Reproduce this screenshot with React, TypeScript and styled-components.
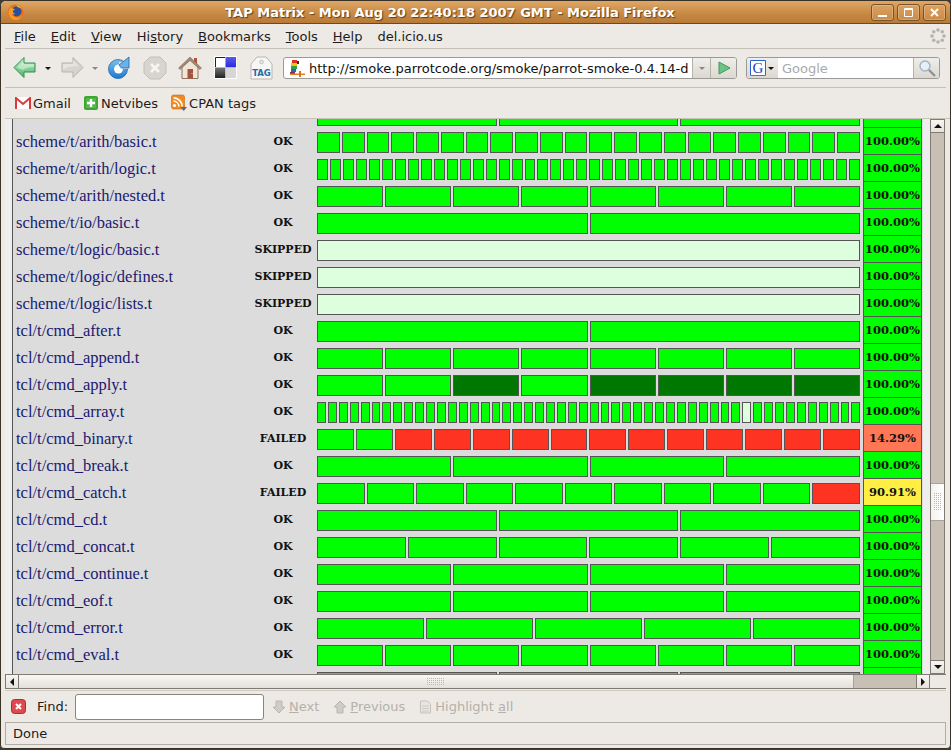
import React from "react";
import styled, { createGlobalStyle } from "styled-components";

const GlobalStyle = createGlobalStyle`
  html, body {
    margin: 0;
    padding: 0;
    background: #3c3b37;
  }
`;

const Window = styled.div`
  width: 951px;
  height: 749px;
  box-sizing: border-box;
  display: flex;
  flex-direction: column;
  background: #edeae5;
  border: 1px solid #3a3226;
  border-radius: 6px 6px 4px 4px;
  overflow: hidden;
  font-family: "DejaVu Sans", sans-serif;
  font-size: 13px;
  color: #1c1c1c;
`;

const TitleBar = styled.div`
  height: 22px;
  flex: none;
  display: flex;
  align-items: center;
  padding: 0 4px 0 6px;
  background: linear-gradient(#dfa766, #c98a45 55%, #b87a38);
  border-bottom: 1px solid #6b4a22;
`;

const TitleText = styled.div`
  flex: 1;
  text-align: center;
  font-weight: bold;
  font-size: 13px;
  color: #fff;
  text-shadow: 1px 1px 1px #5e3e16;
  padding-left: 8px;
`;

const WinButton = styled.div`
  width: 21px;
  height: 15px;
  margin-left: 3px;
  border: 1px solid #7a5426;
  border-radius: 3px;
  display: flex;
  align-items: center;
  justify-content: center;
  background: linear-gradient(#dba264, #c98b48);
  box-shadow: inset 0 0 0 1px rgba(255, 255, 255, 0.22);
`;

const MenuBar = styled.div`
  height: 24px;
  flex: none;
  margin: 0 4px;
  display: flex;
  align-items: center;
  justify-content: space-between;
  padding: 0 0 0 9px;
  border-bottom: 1px solid #c4bfb7;
`;

const MenuItems = styled.div`
  display: flex;
  gap: 15px;
`;

const NavBar = styled.div`
  height: 38px;
  flex: none;
  margin: 0 4px;
  display: flex;
  align-items: center;
  padding-left: 8px;
  border-bottom: 1px solid #c4bfb7;
`;

const NavIcon = styled.div<{ $w: number; $ml?: number }>`
  width: ${({ $w }) => $w}px;
  margin-left: ${({ $ml }) => $ml ?? 0}px;
  flex: none;
  display: flex;
  align-items: center;
  justify-content: center;
`;

const Caret = styled.div<{ $off?: boolean }>`
  width: 0;
  height: 0;
  border-left: 3px solid transparent;
  border-right: 3px solid transparent;
  border-top: 3px solid ${({ $off }) => ($off ? "#888" : "#111")};
`;

const UrlBox = styled.div`
  width: 454px;
  height: 22px;
  margin-left: 10px;
  box-sizing: border-box;
  flex: none;
  display: flex;
  align-items: stretch;
  border: 1px solid #9c9a96;
  border-radius: 3px;
  background: #fff;
  overflow: hidden;
`;

const UrlText = styled.div`
  flex: 1;
  display: flex;
  align-items: center;
  gap: 4px;
  padding-left: 5px;
  overflow: hidden;
  white-space: nowrap;
  font-size: 13px;
  color: #111;
`;

const BoxButton = styled.div<{ $w: number }>`
  width: ${({ $w }) => $w}px;
  flex: none;
  display: flex;
  align-items: center;
  justify-content: center;
  background: linear-gradient(#f0eee9, #dcd8d1);
  border-left: 1px solid #b5b2ac;
`;

const SearchBox = styled(UrlBox)`
  width: 194px;
  margin-left: 9px;
`;

const EngineButton = styled.div`
  width: 31px;
  flex: none;
  display: flex;
  align-items: center;
  gap: 2px;
  padding-left: 3px;
  box-sizing: border-box;
  background: linear-gradient(#f0eee9, #dcd8d1);
`;

const SearchText = styled.div`
  flex: 1;
  display: flex;
  align-items: center;
  padding-left: 4px;
  color: #aaa;
`;

const BookmarkBar = styled.div`
  height: 30px;
  flex: none;
  display: flex;
  align-items: center;
  gap: 13px;
  padding-left: 10px;
  border-bottom: 1px solid #c9c2b6;
  margin: 0 0 0 4px;
`;

const Bookmark = styled.div`
  display: flex;
  align-items: center;
  gap: 2px;
`;

const ContentArea = styled.div`
  flex: 1;
  min-height: 0;
  display: flex;
  margin: 0 4px;
`;

const Viewport = styled.div`
  flex: 1;
  overflow: hidden;
  background: #eeeeee;
  padding-left: 7px;
`;

const Matrix = styled.div`
  width: 910px;
  margin-top: -18px;
  border-left: 1px solid #555;
  background: #dcdcdc;
  font-family: "DejaVu Serif", serif;
`;

const Row = styled.div`
  height: 27px;
  display: flex;
`;

const FileName = styled.div`
  width: 236px;
  flex: none;
  padding: 5px 0 0 3px;
  font-family: "Liberation Serif", serif;
  font-size: 16.5px;
  line-height: 17px;
  color: #191970;
  white-space: nowrap;
`;

const Status = styled.div`
  width: 62px;
  flex: none;
  padding-top: 6px;
  text-align: center;
  font-size: 11px;
  line-height: 15px;
  font-weight: bold;
  color: #111;
`;

const Bars = styled.div`
  width: 543px;
  flex: none;
  margin: 4px 0 0 3px;
  height: 21px;
  display: flex;
  gap: 2px;
`;

const Bar = styled.div<{ $kind: string }>`
  flex: 1;
  box-sizing: border-box;
  border: 1px solid #555;
  background: ${({ $kind }) =>
    ({ g: "#00ff00", d: "#007700", r: "#ff3322", s: "#ddffdd" } as Record<string, string>)[$kind]};
`;

const Percent = styled.div<{ $bg: string }>`
  width: 59px;
  flex: none;
  margin-left: 3px;
  box-sizing: border-box;
  border: 1px solid #555;
  border-top: 0;
  text-align: center;
  font-size: 11.5px;
  font-weight: bold;
  line-height: 27px;
  color: #111;
  background: ${({ $bg }) => $bg};
`;

const VScroll = styled.div`
  width: 15px;
  margin: 0 1px 0 0;
  flex: none;
  display: flex;
  flex-direction: column;
  background: #c9c0b5;
  border-left: 1px solid #7f7a72;
  border-right: 1px solid #7f7a72;
  box-sizing: border-box;
`;

const ScrollButton = styled.div`
  height: 14px;
  flex: none;
  display: flex;
  align-items: center;
  justify-content: center;
  background: linear-gradient(#f7f5f2, #e6e2dc);
  border-top: 1px solid #7f7a72;
  border-bottom: 1px solid #7f7a72;
  box-sizing: border-box;
`;

const VTrack = styled.div`
  flex: 1;
  display: flex;
  flex-direction: column;
  padding-top: 350px;
`;

const VThumb = styled.div`
  height: 36px;
  display: flex;
  align-items: center;
  justify-content: center;
  background: linear-gradient(90deg, #f4f2ef, #ffffff);
  border-top: 1px solid #a8a29a;
  border-bottom: 1px solid #a8a29a;
`;

const Triangle = styled.div<{ $dir: "up" | "down" | "left" | "right" }>`
  width: 0;
  height: 0;
  border: 4px solid transparent;
  ${({ $dir }) =>
    $dir === "up"
      ? "border-bottom-color:#111;border-top-width:0;"
      : $dir === "down"
        ? "border-top-color:#111;border-bottom-width:0;"
        : $dir === "left"
          ? "border-right-color:#111;border-left-width:0;"
          : "border-left-color:#111;border-right-width:0;"}
`;

const HScroll = styled.div`
  height: 15px;
  flex: none;
  margin: 0 4px;
  display: flex;
  box-sizing: border-box;
  border-top: 1px solid #7f7a72;
  border-bottom: 1px solid #7f7a72;
  padding-right: 16px;
`;

const HButton = styled.div`
  width: 12px;
  flex: none;
  display: flex;
  align-items: center;
  justify-content: center;
  background: linear-gradient(#f7f5f2, #e6e2dc);
  border-left: 1px solid #7f7a72;
  border-right: 1px solid #7f7a72;
`;

const HThumb = styled.div`
  flex: 1;
  display: flex;
  align-items: center;
  justify-content: center;
  background: linear-gradient(#f9f7f5, #e4dfd9);
  border-right: 1px solid #a8a29a;
`;

const HTrack = styled.div`
  width: 62px;
  flex: none;
  background: #c9c0b5;
`;

const FindBar = styled.div`
  height: 31px;
  flex: none;
  margin: 1px 4px 0;
  display: flex;
  align-items: center;
  padding-left: 6px;
  border-top: 1px solid #d0ccc5;
`;

const FindLabel = styled.div`
  margin-left: 11px;
`;

const FindInput = styled.div`
  width: 189px;
  height: 26px;
  box-sizing: border-box;
  margin-left: 7px;
  border: 1px solid #8a8378;
  border-radius: 3px;
  background: #fff;
`;

const FindAction = styled.div<{ $ml: number }>`
  margin-left: ${({ $ml }) => $ml}px;
  display: flex;
  align-items: center;
  gap: 3px;
  color: #b4b1ab;
`;

const StatusBar = styled.div`
  height: 23px;
  flex: none;
  margin: 0 4px 3px;
  box-sizing: border-box;
  display: flex;
  align-items: center;
  padding-left: 7px;
  border: 1px solid #b3aea5;
`;

const Key = styled.span`
  text-decoration: underline;
`;

type RowData = { name: string; status: string; bars: string; percent: string };

const rep = (kind: string, n: number) => kind.repeat(n);

const rows: RowData[] = [
  { name: "", status: "", bars: "ggg", percent: "" },
  { name: "scheme/t/arith/basic.t", status: "OK", bars: rep("g", 22), percent: "100.00%" },
  { name: "scheme/t/arith/logic.t", status: "OK", bars: rep("g", 42), percent: "100.00%" },
  { name: "scheme/t/arith/nested.t", status: "OK", bars: rep("g", 8), percent: "100.00%" },
  { name: "scheme/t/io/basic.t", status: "OK", bars: "gg", percent: "100.00%" },
  { name: "scheme/t/logic/basic.t", status: "SKIPPED", bars: "s", percent: "100.00%" },
  { name: "scheme/t/logic/defines.t", status: "SKIPPED", bars: "s", percent: "100.00%" },
  { name: "scheme/t/logic/lists.t", status: "SKIPPED", bars: "s", percent: "100.00%" },
  { name: "tcl/t/cmd_after.t", status: "OK", bars: "gg", percent: "100.00%" },
  { name: "tcl/t/cmd_append.t", status: "OK", bars: rep("g", 8), percent: "100.00%" },
  { name: "tcl/t/cmd_apply.t", status: "OK", bars: "ggdgdddd", percent: "100.00%" },
  { name: "tcl/t/cmd_array.t", status: "OK", bars: rep("g", 39) + "s" + rep("g", 10), percent: "100.00%" },
  { name: "tcl/t/cmd_binary.t", status: "FAILED", bars: "gg" + rep("r", 12), percent: "14.29%" },
  { name: "tcl/t/cmd_break.t", status: "OK", bars: rep("g", 4), percent: "100.00%" },
  { name: "tcl/t/cmd_catch.t", status: "FAILED", bars: rep("g", 10) + "r", percent: "90.91%" },
  { name: "tcl/t/cmd_cd.t", status: "OK", bars: "ggg", percent: "100.00%" },
  { name: "tcl/t/cmd_concat.t", status: "OK", bars: rep("g", 6), percent: "100.00%" },
  { name: "tcl/t/cmd_continue.t", status: "OK", bars: rep("g", 4), percent: "100.00%" },
  { name: "tcl/t/cmd_eof.t", status: "OK", bars: rep("g", 4), percent: "100.00%" },
  { name: "tcl/t/cmd_error.t", status: "OK", bars: rep("g", 5), percent: "100.00%" },
  { name: "tcl/t/cmd_eval.t", status: "OK", bars: rep("g", 8), percent: "100.00%" },
  { name: "", status: "", bars: "ggg", percent: "" },
];

const percentColor = (p: string) =>
  p === "14.29%" ? "#ff7755" : p === "90.91%" ? "#ffee44" : "#00ff00";

const FirefoxLogo = () => (
  <svg width="17" height="17" viewBox="0 0 17 17">
    <circle cx="8.5" cy="8.5" r="8" fill="#e8701a" />
    <circle cx="9.5" cy="7.5" r="5" fill="#2a4f9c" />
    <path d="M4 3c-1 1-2.500 3-2.500 5.500C1.500 12.500 5 16 8.500 16c3 0 6-2 7-5-1.500 2-4 3-6 2.500C7 13 5.500 11.500 5 10c1 .5 2.500.5 3 0-1-1-2.500-1.500-2-3 .5-.8 1.500-1 2-2C7 5 5 4.500 4 3z" fill="#f49a22" />
    <path d="M9 1c2 0 5 1.500 6.200 4.500C14 4 12 3.500 11 3.500 10.500 2.500 9.800 1.700 9 1z" fill="#f8b030" />
  </svg>
);

const BackIcon = () => (
  <svg width="24" height="24" viewBox="0 0 24 24">
    <defs>
      <linearGradient id="bk" x1="0" y1="0" x2="0" y2="1">
        <stop offset="0" stopColor="#c6f0cc" />
        <stop offset="1" stopColor="#4fb56a" />
      </linearGradient>
    </defs>
    <path d="M1 11.500 11 1.500v5.500h11v9H11v5.500z" fill="url(#bk)" stroke="#2f8f4d" />
    <path d="M11 8h10v3c-4-.5-8 .5-11 3L4 11.500 10 5.500z" fill="#e2f8e4" opacity=".55" />
  </svg>
);

const ForwardIcon = () => (
  <svg width="24" height="24" viewBox="0 0 24 24">
    <path d="M23 11.500 13 1.500v5.500H2v9h11v5.500z" fill="#d6d4cf" stroke="#b5b3ae" />
    <path d="M3 8h10V4.500l6 6c-5-1-11 0-16 3z" fill="#e6e4e0" />
  </svg>
);

const ReloadIcon = () => (
  <svg width="24" height="24" viewBox="0 0 24 24">
    <defs>
      <linearGradient id="rl" x1="0" y1="0" x2="0" y2="1">
        <stop offset="0" stopColor="#7cc0f0" />
        <stop offset="1" stopColor="#1f78cc" />
      </linearGradient>
    </defs>
    <circle cx="11" cy="13" r="9.500" fill="url(#rl)" stroke="#1e66ad" strokeWidth=".8" />
    <circle cx="11.500" cy="13" r="4.500" fill="#fff" />
    <path d="M12 6h12v7H13z" fill="#edeae5" />
    <path d="M12 9 22 1v11H14.500z" fill="#69b2ea" stroke="#1e66ad" strokeWidth=".8" />
    <path d="M11 10.500h4.500v5H11z" fill="#fff" opacity="0" />
  </svg>
);

const StopIcon = () => (
  <svg width="24" height="24" viewBox="0 0 24 24">
    <path d="M7 1h10l6 6v10l-6 6H7l-6-6V7z" fill="#d8d5d0" stroke="#c2bfba" />
    <path d="m8 8 8 8m0-8-8 8" stroke="#f6f5f3" strokeWidth="2.600" />
  </svg>
);

const HomeIcon = () => (
  <svg width="24" height="24" viewBox="0 0 24 24">
    <path d="M16 2h3v7h-3z" fill="#b5533c" />
    <path d="M4 11 12 3.500 20 11v11.500H4z" fill="#efe6d8" stroke="#8a7560" />
    <path d="M12 1 .5 12l1.500 1.500L12 4.500 22 13.500 23.500 12z" fill="#a08872" stroke="#7d6a56" strokeWidth=".5" />
    <path d="M9.500 13h5.500v9.500H9.500z" fill="#a5533e" />
    <path d="M13.500 17h1v1h-1z" fill="#f0d060" />
  </svg>
);

const DeliciousIcon = () => (
  <svg width="24" height="24" viewBox="0 0 24 24">
    <defs>
      <linearGradient id="dBlue" x1="0" y1="0" x2="0" y2="1">
        <stop offset="0" stopColor="#5a5af0" />
        <stop offset="1" stopColor="#2a2ad8" />
      </linearGradient>
      <linearGradient id="dDark" x1="0" y1="0" x2="0" y2="1">
        <stop offset="0" stopColor="#777" />
        <stop offset="1" stopColor="#222" />
      </linearGradient>
    </defs>
    <rect x="0" y="0" width="23" height="23" fill="#fff" />
    <path d="M1.500 11V1.500H11" fill="none" stroke="#222" />
    <rect x="11.500" y="1" width="10.500" height="10.500" fill="url(#dBlue)" />
    <rect x="1" y="11.500" width="10.500" height="10.500" fill="url(#dDark)" />
    <rect x="11.500" y="11.500" width="10.500" height="10.500" fill="#d6d6d6" />
  </svg>
);

const TagIcon = () => (
  <svg width="24" height="24" viewBox="0 0 24 24">
    <path d="M8 1h9l6 7v15H2V8z" fill="#f6f6f4" stroke="#b6b6b2" />
    <circle cx="12.500" cy="6" r="1.800" fill="#edeae5" stroke="#aaa" strokeWidth=".7" />
    <text x="12.500" y="20" textAnchor="middle" fontFamily="'DejaVu Sans'" fontWeight="bold" fontSize="8.500" fill="#2a6aa5">TAG</text>
  </svg>
);

const ParrotIcon = () => (
  <svg width="16" height="18" viewBox="0 0 16 18">
    <path d="M3 1h5v3H3z" fill="#e03020" />
    <path d="M8 2h2v3H8z" fill="#333" />
    <path d="M2 4h6v3H2z" fill="#f0c020" />
    <path d="M2 7h6v3H2z" fill="#30a040" />
    <path d="M2 10h5v3H2z" fill="#3060c0" />
    <path d="M1 13h5v2H1z" fill="#803060" />
    <path d="M1 14.500h15v1.500H1z" fill="#e08020" />
    <path d="M10 12h2v6h-2z" fill="#e07020" />
  </svg>
);

const GoIcon = () => (
  <svg width="14" height="14" viewBox="0 0 14 14">
    <path d="M2 1 13 7 2 13z" fill="#6cc383" stroke="#3f9a5e" />
  </svg>
);

const GoogleIcon = () => (
  <svg width="16" height="16" viewBox="0 0 16 16">
    <rect x="0" y="0" width="16" height="16" fill="#fff" />
    <path d="M.5 15.500V.5h15" fill="none" stroke="#2a5fd0" />
    <path d="M15.500.5v15" fill="none" stroke="#d03020" />
    <path d="M.5 15.500h15" fill="none" stroke="#30a040" />
    <text x="8" y="13" textAnchor="middle" fontFamily="'Liberation Serif'" fontSize="15" fill="#2040c0">G</text>
  </svg>
);

const SearchIcon = () => (
  <svg width="18" height="18" viewBox="0 0 18 18">
    <circle cx="7" cy="7" r="5" fill="#e6eef6" stroke="#9fb2c4" strokeWidth="1.400" />
    <path d="m11 11 6 6" stroke="#8b8f93" strokeWidth="2.200" />
  </svg>
);

const Throbber = () => (
  <svg width="16" height="16" viewBox="0 0 16 16">
    {[0, 45, 90, 135, 180, 225, 270, 315].map((a) => (
      <circle
        key={a}
        cx={8 + 6 * Math.cos((a * Math.PI) / 180)}
        cy={8 + 6 * Math.sin((a * Math.PI) / 180)}
        r="1.800"
        fill="#b5b2ae"
      />
    ))}
  </svg>
);

const GmailIcon = () => (
  <svg width="16" height="12" viewBox="0 0 16 12">
    <rect width="16" height="12" fill="#fff" />
    <path d="M1 12V1l7 6 7-6v11" fill="none" stroke="#d93a3a" strokeWidth="2" />
  </svg>
);

const NetvibesIcon = () => (
  <svg width="15" height="14" viewBox="0 0 15 14">
    <rect width="14" height="14" rx="2" fill="#3fa535" />
    <rect x="2" y="2" width="10" height="10" fill="#55b84a" />
    <path d="M7 3v8M3 7h8" stroke="#fff" strokeWidth="2.400" />
  </svg>
);

const FeedIcon = () => (
  <svg width="16" height="18" viewBox="0 0 16 18">
    <rect x=".5" y="1" width="13" height="14" rx="2" fill="#f08a24" stroke="#c96a10" strokeWidth=".6" />
    <circle cx="3.500" cy="11.500" r="1.600" fill="#fff" />
    <path d="M2.500 7A6 6 0 0 1 8 12.500M2.500 3.800A9 9 0 0 1 11.200 12.500" fill="none" stroke="#fff" strokeWidth="1.600" />
    <path d="M9.500 13h6.500l-3.250 4z" fill="#666" />
  </svg>
);

const CloseFindIcon = () => (
  <svg width="15" height="15" viewBox="0 0 15 15">
    <rect x=".5" y=".5" width="14" height="14" rx="3" fill="#dc4a50" stroke="#a83035" />
    <path d="m5 5 5 5m0-5-5 5" stroke="#fff" strokeWidth="2" />
  </svg>
);

const NextIcon = () => (
  <svg width="14" height="14" viewBox="0 0 14 14">
    <path d="M4 1h6v6h3l-6 6-6-6h3z" fill="#cfccc7" stroke="#b9b6b0" />
  </svg>
);

const PrevIcon = () => (
  <svg width="14" height="14" viewBox="0 0 14 14">
    <path d="M4 13h6V7h3L7 1 1 7h3z" fill="#cfccc7" stroke="#b9b6b0" />
  </svg>
);

const HighlightIcon = () => (
  <svg width="13" height="14" viewBox="0 0 13 14">
    <path d="M1.500 1h7l3 3v9h-10z" fill="#e8e6e2" stroke="#c4c1bb" />
    <path d="M3 6h7M3 8.500h7M3 11h7" stroke="#cbc8c2" />
  </svg>
);

const Grip = ({ cols, rows: r }: { cols: number; rows: number }) => (
  <svg width={cols * 2} height={r * 2} viewBox={`0 0 ${cols * 2} ${r * 2}`}>
    {Array.from({ length: cols * r }, (_, i) => (
      <rect key={i} x={(i % cols) * 2} y={Math.floor(i / cols) * 2} width="1" height="1" fill="#bdb8b0" />
    ))}
  </svg>
);

const App: React.FC = () => (
  <Window>
    <GlobalStyle />
    <TitleBar>
      <FirefoxLogo />
      <TitleText>TAP Matrix - Mon Aug 20 22:40:18 2007 GMT - Mozilla Firefox</TitleText>
      <WinButton>
        <svg width="9" height="9" viewBox="0 0 9 9"><path d="M0 7h9v2H0z" fill="#fff" /></svg>
      </WinButton>
      <WinButton>
        <svg width="9" height="9" viewBox="0 0 9 9"><path d="M.5.5h8v8h-8zM.5 1.500h8" fill="none" stroke="#fff" /></svg>
      </WinButton>
      <WinButton>
        <svg width="9" height="9" viewBox="0 0 9 9"><path d="m1 1 7 7m0-7-7 7" stroke="#fff" strokeWidth="2" /></svg>
      </WinButton>
    </TitleBar>

    <MenuBar>
      <MenuItems>
        <span><Key>F</Key>ile</span>
        <span><Key>E</Key>dit</span>
        <span><Key>V</Key>iew</span>
        <span>Hi<Key>s</Key>tory</span>
        <span><Key>B</Key>ookmarks</span>
        <span><Key>T</Key>ools</span>
        <span><Key>H</Key>elp</span>
        <span>del.icio.us</span>
      </MenuItems>
      <Throbber />
    </MenuBar>

    <NavBar>
      <NavIcon $w={24}><BackIcon /></NavIcon>
      <NavIcon $w={8} $ml={7}><Caret /></NavIcon>
      <NavIcon $w={24} $ml={8}><ForwardIcon /></NavIcon>
      <NavIcon $w={8} $ml={7}><Caret $off /></NavIcon>
      <NavIcon $w={24} $ml={8}><ReloadIcon /></NavIcon>
      <NavIcon $w={24} $ml={12}><StopIcon /></NavIcon>
      <NavIcon $w={24} $ml={11}><HomeIcon /></NavIcon>
      <NavIcon $w={24} $ml={12}><DeliciousIcon /></NavIcon>
      <NavIcon $w={24} $ml={11}><TagIcon /></NavIcon>
      <UrlBox>
        <UrlText><ParrotIcon />http://smoke.parrotcode.org/smoke/parrot-smoke-0.4.14-d</UrlText>
        <BoxButton $w={17}><Caret $off /></BoxButton>
        <BoxButton $w={25}><GoIcon /></BoxButton>
      </UrlBox>
      <SearchBox>
        <EngineButton><GoogleIcon /><Caret /></EngineButton>
        <SearchText>Google</SearchText>
        <BoxButton $w={25}><SearchIcon /></BoxButton>
      </SearchBox>
    </NavBar>

    <BookmarkBar>
      <Bookmark><GmailIcon />Gmail</Bookmark>
      <Bookmark><NetvibesIcon />Netvibes</Bookmark>
      <Bookmark><FeedIcon />CPAN tags</Bookmark>
    </BookmarkBar>

    <ContentArea>
      <Viewport>
        <Matrix>
          {rows.map((row, i) => (
            <Row key={i}>
              <FileName>{row.name}</FileName>
              <Status>{row.status}</Status>
              <Bars>
                {row.bars.split("").map((k, j) => (
                  <Bar key={j} $kind={k} />
                ))}
              </Bars>
              <Percent $bg={percentColor(row.percent)}>{row.percent}</Percent>
            </Row>
          ))}
        </Matrix>
      </Viewport>
      <VScroll>
        <ScrollButton><Triangle $dir="up" /></ScrollButton>
        <VTrack>
          <VThumb><Grip cols={4} rows={9} /></VThumb>
        </VTrack>
        <ScrollButton><Triangle $dir="down" /></ScrollButton>
      </VScroll>
    </ContentArea>

    <HScroll>
      <HButton><Triangle $dir="left" /></HButton>
      <HThumb><Grip cols={9} rows={4} /></HThumb>
      <HTrack />
      <HButton><Triangle $dir="right" /></HButton>
    </HScroll>

    <FindBar>
      <CloseFindIcon />
      <FindLabel>Find:</FindLabel>
      <FindInput />
      <FindAction $ml={8}><NextIcon /><span><Key>N</Key>ext</span></FindAction>
      <FindAction $ml={14}><PrevIcon /><span><Key>P</Key>revious</span></FindAction>
      <FindAction $ml={14}><HighlightIcon /><span>Highlight <Key>a</Key>ll</span></FindAction>
    </FindBar>

    <StatusBar>Done</StatusBar>
  </Window>
);

export default App;
